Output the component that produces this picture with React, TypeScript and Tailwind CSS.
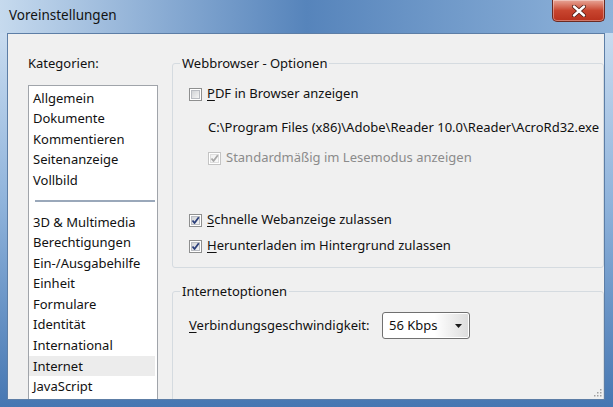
import type { ReactNode } from "react";

const FONT = { fontFamily: '"Noto Sans", "Open Sans", Arial, sans-serif' };

const categoriesTop = ["Allgemein", "Dokumente", "Kommentieren", "Seitenanzeige", "Vollbild"];
const categoriesBottom = [
  "3D & Multimedia",
  "Berechtigungen",
  "Ein-/Ausgabehilfe",
  "Einheit",
  "Formulare",
  "Identität",
  "International",
  "Internet",
  "JavaScript",
];

function CheckBox({ checked = false, disabled = false }: { checked?: boolean; disabled?: boolean }) {
  const border = disabled ? "#c4c4c4" : "#8e8f8f";
  const check = disabled ? "#a8a8a8" : "#2b3f7a";
  return (
    <svg width="13" height="13" viewBox="0 0 13 13" className="shrink-0">
      <defs>
        <linearGradient id={disabled ? "cbd" : "cbn"} x1="0" y1="0" x2="1" y2="1">
          <stop offset="0" stopColor={disabled ? "#f0f0f0" : "#cfd1d4"} />
          <stop offset="1" stopColor={disabled ? "#fbfbfb" : "#f7f7f7"} />
        </linearGradient>
      </defs>
      <rect x="0.5" y="0.5" width="12" height="12" fill="#fff" stroke={border} />
      <rect x="2.5" y="2.5" width="8" height="8" fill={`url(#${disabled ? "cbd" : "cbn"})`} stroke={disabled ? "#dedede" : "#b9bcc2"} />
      {checked && (
        <path d="M3.5 6.5 L5.5 9 L9.8 3.2" fill="none" stroke={check} strokeWidth="1.8" strokeLinejoin="round" />
      )}
    </svg>
  );
}

function Group({ title, children, className = "" }: { title: string; children: ReactNode; className?: string }) {
  return (
    <fieldset className={`border border-[#d5dbe0] rounded-[3px] pl-[16px] ${className}`}>
      <legend className="ml-[-9px] px-[2px] leading-[20px] text-[13px] text-[#111]">{title}</legend>
      {children}
    </fieldset>
  );
}

function U({ children }: { children: ReactNode }) {
  return <span className="underline underline-offset-[2px] decoration-[1px]">{children}</span>;
}

export default function App() {
  return (
    <div
      className="relative w-[613px] h-[407px] overflow-hidden flex flex-col bg-gradient-to-b from-[#d3e3f3] via-[#8fb3db] to-[#4677b2]"
      style={FONT}
    >
      {/* title bar */}
      <div className="relative h-[33px] shrink-0 flex items-center pl-[9px] bg-gradient-to-r from-[#c6daee] via-[#5684bb] to-[#8fb3da]">
        <span className="text-[13.5px] text-[#111] leading-none pb-[1px]">Voreinstellungen</span>
        <div className="absolute right-[8px] top-0 w-[53px] h-[22px] rounded-b-[5px] border border-t-0 border-[#6b2a22] bg-gradient-to-b from-[#e7a597] via-[#c8452f] to-[#b8301c] flex items-center justify-center shadow-[inset_0_0_0_1px_rgba(255,255,255,0.35)]">
          <svg width="14" height="12" viewBox="0 0 14 12">
            <path d="M2 1.5 L12 10.5 M12 1.5 L2 10.5" stroke="#4a1a14" strokeWidth="4" strokeLinecap="round" />
            <path d="M2 1.5 L12 10.5 M12 1.5 L2 10.5" stroke="#ffffff" strokeWidth="2.4" strokeLinecap="round" />
          </svg>
        </div>
      </div>

      {/* client area */}
      <div className="relative flex-1 ml-[7px] mr-[8px] mb-[7px] border border-[#5d7ea6] bg-[#f0f0f0] flex overflow-hidden">
        {/* categories */}
        <div className="w-[157px] shrink-0 flex flex-col pt-[19px] pl-[20px]">
          <div className="leading-[20px] text-[13px] text-[#111]">Kategorien:</div>
          <div className="mt-[12px] w-[130px] flex-1 bg-white border border-b-0 border-[#a0a4aa] pt-[1.5px] text-[13px] text-[#111]">
            {categoriesTop.map((c) => (
              <div key={c} className="h-[20.5px] leading-[20.5px] pl-[4px]">
                {c}
              </div>
            ))}
            <div className="h-[21.5px] flex items-center pl-[6px] pr-[2px]">
              <div className="h-[2px] w-full bg-[#9aa8ba]" />
            </div>
            {categoriesBottom.map((c) => (
              <div
                key={c}
                className={`h-[20.6px] leading-[20.6px] pl-[4px] mr-[2px] ${c === "Internet" ? "bg-[#ececec]" : ""}`}
              >
                {c}
              </div>
            ))}
          </div>
        </div>

        {/* options */}
        <div className="flex-1 flex flex-col pt-[19px] pl-[7px] text-[13px] text-[#111]">
          <Group title="Webbrowser - Optionen" className="pb-[11px]">
            <div className="mt-[11px] h-[20px] flex items-center gap-[5px]">
              <CheckBox />
              <span>
                <U>P</U>DF in Browser anzeigen
              </span>
            </div>
            <div className="mt-[14px] h-[20px] flex items-center pl-[19px] whitespace-nowrap">
              C:\Program Files (x86)\Adobe\Reader 10.0\Reader\AcroRd32.exe
            </div>
            <div className="mt-[10px] h-[20px] flex items-center gap-[5px] pl-[19px] text-[#8b8b8b]">
              <CheckBox checked disabled />
              <span>Standardmäßig im Lesemodus anzeigen</span>
            </div>
            <div className="mt-[42px] h-[20px] flex items-center gap-[5px]">
              <CheckBox checked />
              <span>
                <U>S</U>chnelle Webanzeige zulassen
              </span>
            </div>
            <div className="mt-[6px] h-[20px] flex items-center gap-[5px]">
              <CheckBox checked />
              <span>
                <U>H</U>erunterladen im Hintergrund zulassen
              </span>
            </div>
          </Group>

          <Group title="Internetoptionen" className="mt-[13px] h-[140px] shrink-0">
            <div className="mt-[11px] flex items-center">
              <span className="w-[193px]">
                <U>V</U>erbindungsgeschwindigkeit:
              </span>
              <div className="w-[88px] h-[27px] rounded-[3px] border border-[#707070] bg-gradient-to-r from-white from-60% to-[#dcdcdc] flex items-center justify-between pl-[6px] pr-[7px] shadow-[inset_0_0_0_1px_#ffffff]">
                <span>56 Kbps</span>
                <svg width="7" height="4" viewBox="0 0 7 4">
                  <path d="M0 0 H7 L3.5 4 Z" fill="#1a1a1a" />
                </svg>
              </div>
            </div>
          </Group>
        </div>

        {/* resize grip */}
        <svg width="10" height="10" viewBox="0 0 10 10" className="absolute right-[2px] bottom-[2px]">
          {[
            [8, 2],
            [5, 5],
            [8, 5],
            [2, 8],
            [5, 8],
            [8, 8],
          ].map(([x, y]) => (
            <rect key={`${x}-${y}`} x={x} y={y} width="1.5" height="1.5" fill="#a0a0a0" />
          ))}
        </svg>
      </div>
    </div>
  );
}
